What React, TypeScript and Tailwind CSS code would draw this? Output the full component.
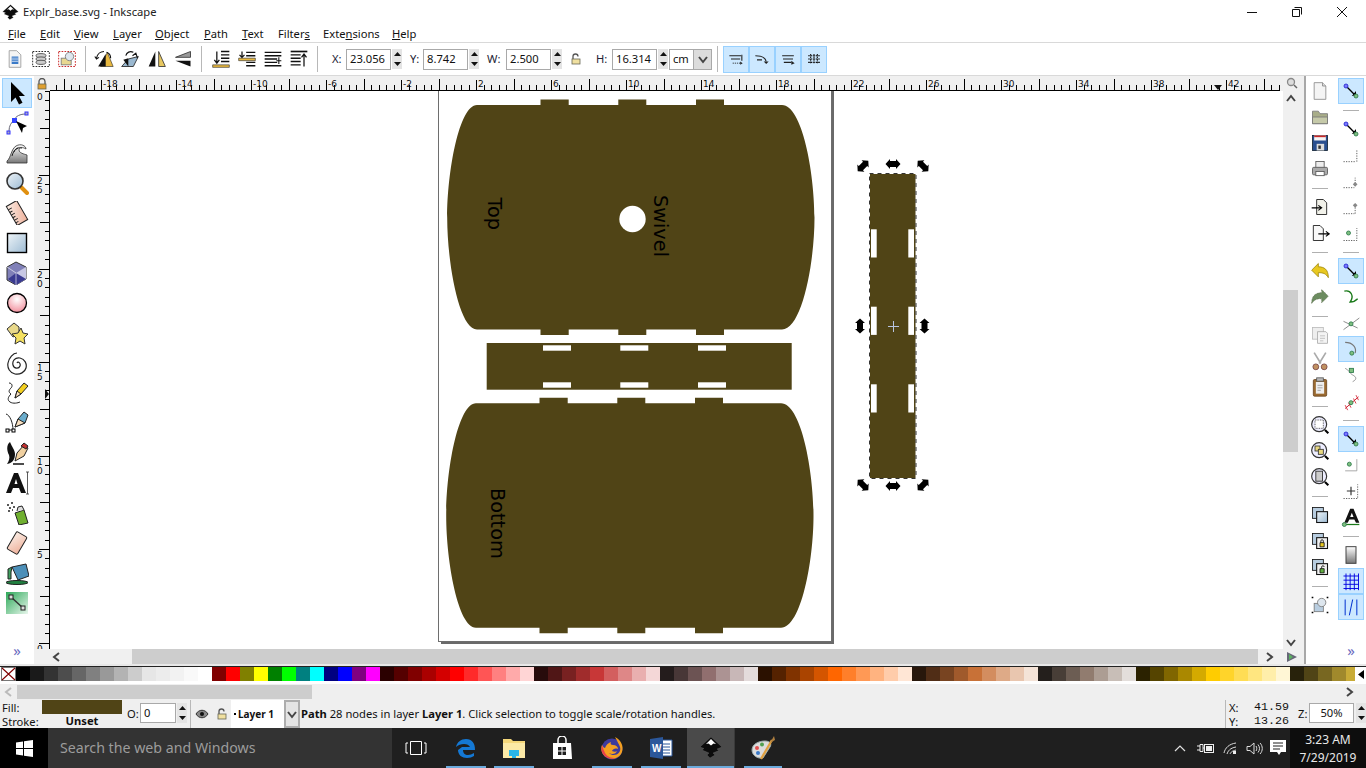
import type { ReactNode } from "react";

const OLIVE = "#504416";

const swatches = [
  "#000000","#1a1a1a","#333333","#4d4d4d","#666666","#808080","#999999","#b3b3b3","#cccccc","#e6e6e6","#ececec","#f2f2f2","#f9f9f9","#ffffff",
  "#800000","#ff0000","#808000","#ffff00","#008000","#00ff00","#008080","#00ffff","#000080","#0000ff","#800080","#ff00ff",
  "#2b0000","#550000","#800000","#aa0000","#d40000","#ff0000","#ff2a2a","#ff5555","#ff8080","#ffaaaa","#ffd5d5",
  "#280b0b","#501616","#782121","#a02c2c","#c83737","#d35f5f","#de8787","#e9afaf","#f4d7d7",
  "#241c1c","#483737","#6c5353","#916f6f","#ac9393","#c8b7b7","#e3dbdb",
  "#2b1100","#552200","#803300","#aa4400","#d45500","#ff6600","#ff7f2a","#ff9955","#ffb380","#ffccaa","#ffe6d5",
  "#28170b","#502d16","#784421","#a05a2c","#c87137","#d38d5f","#deaa87","#e9c6af","#f4e3d7",
  "#241f1c","#483e37","#6c5d53","#917c6f","#ac9d93","#c8beb7","#e3dedb",
  "#2b2200","#554400","#806600","#aa8800","#d4aa00","#ffcc00","#ffd42a","#ffdd55","#ffe680","#ffeeaa","#fff6d5",
  "#28220b","#504416","#786721","#a0892c","#c8ab37",
];

const blueDot = (x: number, y: number) => <circle cx={x} cy={y} r="2.4" fill="#7a7aff" stroke="#2222cc" />;
const greenDot = (x: number, y: number) => <circle cx={x} cy={y} r="2.4" fill="#7fbf7f" stroke="#2a7a4a" />;
const dots = (d: string) => <path d={d} fill="none" stroke="#444" strokeDasharray="1.5 1.5" />;

const icons: Record<string, ReactNode> = {
  select: <path d="M6 1v20l4.500-4.500 3.500 7 3.500-1.800-3.500-6.700h6z" fill="#000" />,
  node: (
    <>
      <path d="M9 9C11 5 15 3 21 3M9 9C6 12 4 15 4 20" fill="none" stroke="#667" />
      <rect x="7" y="7" width="5" height="5" fill="#3344ff" />
      <rect x="20" y="1" width="3" height="3" fill="#aab" stroke="#33f" />
      <rect x="2" y="20" width="3" height="3" fill="#aab" stroke="#33f" />
      <path d="M11 10l11 5-4 2-1 5z" fill="#000" />
    </>
  ),
  tweak: (
    <>
      <path d="M2 20C6 17 6 8 11 5c5-3 10 0 10 3-3-2-7-2-7 1s5 4 8 5v8H2z" fill="url(#gGray)" stroke="#333" strokeWidth="0.8" />
      <path d="M9 11c1-3 4-5 8-4M7 15c1-4 3-7 6-8" fill="none" stroke="#222" />
    </>
  ),
  zoom: (
    <>
      <path d="M15 15l7 7" stroke="#e09010" strokeWidth="4" strokeLinecap="round" />
      <circle cx="10" cy="10" r="8" fill="url(#gBlue)" stroke="#333" strokeWidth="1.6" />
    </>
  ),
  measure: (
    <g transform="rotate(-30 12 12)">
      <rect x="6" y="1" width="12" height="22" fill="url(#gPeach)" stroke="#222" />
      <path d="M6 5h4M6 8h3M6 11h4M6 14h3M6 17h4M6 20h3" stroke="#222" />
    </g>
  ),
  rect: <rect x="2.500" y="2.500" width="19" height="19" fill="url(#gBlue)" stroke="#000" strokeWidth="1.400" />,
  box: (
    <>
      <path d="M11 1l10 5v12l-10 6-9-5V6z" fill="#8080b8" stroke="#333" />
      <path d="M11 12l10-6v12l-10 6z" fill="#c8c8e4" />
      <path d="M3 18l8-6 10 6-10 6z" fill="#3a3a90" />
      <path d="M2 6l9 6v12" fill="none" stroke="#fff" strokeWidth="0.6" />
    </>
  ),
  circle: <circle cx="12" cy="12" r="9.500" fill="url(#gPink)" stroke="#000" strokeWidth="1.300" />,
  star: (
    <>
      <path d="M2 8l7-6 5 4 0 7-6 3-3-4z" fill="#e8d88a" stroke="#333" />
      <path d="M16 7l2 5 5 1-4 4 1 6-5-3-5 3 1-6-4-4 6-1z" fill="#f4e060" stroke="#333" />
    </>
  ),
  spiral: (
    <path d="M12 12c1-2 4 0 3 3s-6 3-7-1 2-8 7-7 7 6 6 10-6 7-11 6-8-6-7-11S8 2 12 2" fill="none" stroke="#222" strokeWidth="1.200" />
  ),
  pencil: (
    <>
      <path d="M4 2c3 0 4 3 2 5s-3 4 0 6c-3 3-4 6-1 8 3 2 8 1 10 0" fill="none" stroke="#222" />
      <path d="M10 17l2-7 7-8 4 3-7 8z" fill="#f4d020" stroke="#222" />
      <path d="M10 17l2-7 4 3z" fill="#f8e0c0" stroke="#222" />
    </>
  ),
  pen: (
    <>
      <path d="M1 3c4 1 7 9 7 16H3" fill="none" stroke="#222" />
      <rect x="1" y="18" width="3" height="3" fill="#fff" stroke="#000" />
      <rect x="7" y="18" width="3" height="3" fill="#fff" stroke="#000" />
      <path d="M10 16l3-8 6-7 4 3-3 8z" fill="#6aaccc" stroke="#222" />
      <path d="M10 16l3-8 7 4z" fill="#f8e0c0" stroke="#222" />
    </>
  ),
  callig: (
    <>
      <path d="M5 1c-4 3-3 9-1 13 1 3 0 6-2 9 6-1 8-5 8-10 0-4-3-7-5-12z" fill="#111" />
      <path d="M10 20l2-8 7-8 4 3-4 8z" fill="#f0d0a0" stroke="#222" />
      <path d="M16 5l3-3 4 3-2 3z" fill="#c03030" stroke="#222" />
      <path d="M8 23h11" stroke="#111" strokeWidth="1.500" />
    </>
  ),
  text: (
    <>
      <path d="M1 22L9 2h4l8 20h-5l-2-5H8l-2 5zM9.500 13h3L11 8z" fill="#111" fillRule="evenodd" />
      <path d="M21 1h3M22.500 1v22M21 23h3" stroke="#333" strokeWidth="0.800" />
    </>
  ),
  spray: (
    <>
      <path d="M10 12l9-3 4 13-9 2z" fill="#70b030" stroke="#222" />
      <path d="M12 10l1-4 4-1 2 4" fill="#ddd" stroke="#222" />
      <path d="M2 4h2M6 2h2M4 7h2M8 6h2M3 10h2M7 9h1" stroke="#222" strokeWidth="1.500" />
    </>
  ),
  eraser: (
    <g transform="rotate(30 12 12)">
      <rect x="6" y="2" width="12" height="20" rx="1.500" fill="url(#gPeach)" stroke="#222" />
    </g>
  ),
  bucket: (
    <>
      <ellipse cx="12" cy="21.500" rx="11" ry="2" fill="#208040" stroke="#222" />
      <path d="M7 6l14-3 3 12-11 4z" fill="#4c8fb8" stroke="#222" />
      <path d="M7 6l-4 2 0 10 3 0 0-7z" fill="#40a060" stroke="#222" />
    </>
  ),
  gradient: (
    <>
      <rect x="1" y="1" width="22" height="22" fill="url(#gGreen)" />
      <path d="M6 6l12 11" stroke="#333" strokeWidth="1.500" />
      <rect x="4" y="4" width="4" height="4" fill="#ddd" stroke="#222" />
      <rect x="16" y="15" width="4" height="4" fill="#ddd" stroke="#222" />
    </>
  ),
  page: (
    <>
      <path d="M5 2h10l4 4v16H5z" fill="#f4f4f4" stroke="#888" />
      <path d="M15 2v4h4" fill="#ddd" stroke="#888" />
    </>
  ),
  open: (
    <>
      <path d="M3 5h7l2 3h9v12H3z" fill="#a8ad88" stroke="#777" />
      <path d="M3 12h18v8H3z" fill="#c5c9a9" stroke="#777" />
    </>
  ),
  save: (
    <>
      <rect x="3" y="3" width="18" height="18" fill="#2a4f90" stroke="#123" />
      <rect x="5" y="3" width="14" height="6" fill="#f4f4f4" />
      <rect x="5" y="3" width="14" height="2" fill="#c62828" />
      <rect x="8" y="13" width="9" height="8" fill="#ddd" />
      <rect x="10" y="15" width="3" height="4" fill="#333" />
    </>
  ),
  print: (
    <>
      <rect x="7" y="3" width="10" height="8" fill="#eee" stroke="#555" />
      <rect x="3" y="10" width="18" height="9" rx="1.500" fill="#aaa" stroke="#555" />
      <rect x="7" y="15" width="10" height="5" fill="#fff" stroke="#555" />
    </>
  ),
  imp: (
    <>
      <path d="M8 3h8l4 4v14H8z" fill="#f2f2ea" stroke="#111" />
      <path d="M2 13h11M10 10l4 3-4 3" fill="none" stroke="#000" strokeWidth="1.300" />
    </>
  ),
  exp: (
    <>
      <path d="M4 3h8l4 4v14H4z" fill="#f8f8f8" stroke="#111" />
      <path d="M10 13h12M19 10l4 3-4 3" fill="none" stroke="#000" strokeWidth="1.300" />
    </>
  ),
  undo: <path d="M2 11l8-8v4c7 0 12 3 12 13-3-5-6-6-12-6v5z" fill="#e8c820" stroke="#a08810" />,
  redo: <path d="M22 11l-8-8v4C7 7 2 10 2 20c3-5 6-6 12-6v5z" fill="#6c8c60" stroke="#607050" strokeDasharray="1 1" />,
  copy: (
    <>
      <rect x="3" y="3" width="13" height="14" fill="#eee" stroke="#bbb" />
      <path d="M9 8h10l2 2v12H9z" fill="#f4f4f4" stroke="#aaa" />
      <path d="M12 13h6M12 16h6M12 19h4" stroke="#bbb" />
    </>
  ),
  cut: (
    <>
      <path d="M5 2l8 13M19 2l-8 13" stroke="#aaa" strokeWidth="2" />
      <circle cx="7" cy="19" r="3.500" fill="#c09060" stroke="#744" />
      <circle cx="17" cy="19" r="3.500" fill="#c09060" stroke="#744" />
    </>
  ),
  paste: (
    <>
      <rect x="4" y="3" width="16" height="20" rx="1.500" fill="#9a6a30" stroke="#6a4420" />
      <path d="M7 6h10v14H7z" fill="#eee" />
      <rect x="8" y="1" width="8" height="4" fill="#bbb" stroke="#555" />
      <path d="M9 10h6M9 13h6M9 16h4" stroke="#999" />
    </>
  ),
  zoomSel: (
    <>
      <circle cx="11" cy="11" r="9" fill="#eef" stroke="#333" strokeWidth="1.400" />
      <rect x="6" y="6" width="10" height="10" fill="#fff" stroke="#333" strokeDasharray="1 1" />
      <path d="M18 18l4 4" stroke="#000" strokeWidth="2.500" />
    </>
  ),
  zoomDraw: (
    <>
      <circle cx="11" cy="11" r="9" fill="#eef" stroke="#333" strokeWidth="1.400" />
      <rect x="6" y="6" width="6" height="6" fill="#e8d880" stroke="#333" />
      <rect x="10" y="10" width="6" height="6" fill="#e8d880" stroke="#333" />
      <path d="M18 18l4 4" stroke="#000" strokeWidth="2.500" />
    </>
  ),
  zoomPage: (
    <>
      <circle cx="11" cy="11" r="9" fill="#eef" stroke="#333" strokeWidth="1.400" />
      <rect x="7" y="5" width="8" height="12" fill="#ccc" stroke="#222" />
      <path d="M18 18l4 4" stroke="#000" strokeWidth="2.500" />
    </>
  ),
  dup: (
    <>
      <rect x="3" y="3" width="13" height="13" fill="#b8cde0" stroke="#111" />
      <rect x="8" y="8" width="13" height="13" fill="url(#gBlue)" stroke="#111" strokeWidth="1.300" />
    </>
  ),
  clone: (
    <>
      <rect x="3" y="3" width="13" height="13" fill="#b8cde0" stroke="#111" />
      <rect x="8" y="8" width="13" height="13" fill="#f0f0f0" stroke="#111" strokeWidth="1.300" />
      <path d="M12 14h5v5h-5z" fill="#e8c820" stroke="#111" />
      <path d="M13 14v-2a1.500 1.500 0 013 0v2" fill="none" stroke="#111" />
    </>
  ),
  unlink: (
    <>
      <rect x="3" y="3" width="13" height="13" fill="#b8cde0" stroke="#111" />
      <rect x="8" y="8" width="13" height="13" fill="#f0f0f0" stroke="#111" strokeWidth="1.300" />
      <path d="M12 14h5v5h-5z" fill="#60b040" stroke="#111" />
      <path d="M14 14v-2a1.500 1.500 0 013 0" fill="none" stroke="#111" />
    </>
  ),
  selObj: (
    <>
      <path d="M2 2h2v2H2zM20 2h2v2h-2zM2 20h2v2H2zM20 20h2v2h-2z" fill="#000" />
      <rect x="5" y="10" width="11" height="10" fill="#b8cde0" stroke="#777" />
      <circle cx="14" cy="9" r="5" fill="#dde6ee" stroke="#777" />
    </>
  ),
  snapMain: (
    <>
      <path d="M6 6l11 11" stroke="#000" strokeWidth="1.600" />
      <path d="M13 18l5-1 0-5z" fill="#000" />
      {blueDot(6, 6)}
      {greenDot(18, 18)}
    </>
  ),
  snapBbox: dots("M3 20h14M19 20V6"),
  snapEdge: (
    <>
      {dots("M3 20h13M17 18V8")}
      <rect x="15" y="14" width="4" height="4" fill="#888" transform="rotate(45 17 16)" />
    </>
  ),
  snapCorner: (
    <>
      {dots("M3 20h13M17 20V10")}
      <rect x="15" y="8" width="4" height="4" fill="#888" transform="rotate(45 17 10)" />
    </>
  ),
  snapCenter: (
    <>
      {dots("M3 21h16V6")}
      {greenDot(9, 12)}
    </>
  ),
  snapPath: <path d="M4 5c8-2 12 6 7 13 3 0 6-1 9-4" fill="none" stroke="#1a7a1a" strokeWidth="1.600" />,
  snapInter: (
    <>
      <path d="M3 20L22 6M3 10l17 8" stroke="#777" />
      {greenDot(12, 13)}
    </>
  ),
  snapCurve: (
    <>
      <path d="M5 4c9 0 14 6 12 13" fill="none" stroke="#777" strokeWidth="1.400" />
      {greenDot(13, 17)}
    </>
  ),
  snapSmooth: (
    <>
      <path d="M5 4c5 2 5 6 9 8s6 5 0 8" fill="none" stroke="#888" />
      <rect x="10" y="4" width="5" height="5" fill="#7fbf7f" stroke="#2a7a4a" />
    </>
  ),
  snapMid: (
    <>
      <path d="M5 21L21 7" stroke="#d02030" strokeWidth="1.200" />
      <path d="M5 17l3 6M9 14l3 6M15 9l3 6M18 5l3 6" stroke="#d02030" />
      {greenDot(12, 14)}
    </>
  ),
  snapObjMid: (
    <>
      <path d="M5 19h14V5" fill="none" stroke="#999" />
      {greenDot(10, 11)}
    </>
  ),
  snapObjCenter: (
    <>
      <path d="M7 12h10M12 7v10" stroke="#333" strokeWidth="1.400" />
      {dots("M3 21h17V4")}
    </>
  ),
  snapText: (
    <>
      <path d="M4 19L11 2h4l7 17h-4l-2-4H10l-2 4zM11 12h4l-2-5z" fill="#111" fillRule="evenodd" />
      <path d="M3 21h19" stroke="#1a7a1a" strokeWidth="1.500" />
      {greenDot(4, 21)}
    </>
  ),
  snapPage: <rect x="6" y="2" width="12" height="20" fill="url(#gGray)" stroke="#444" strokeWidth="1.200" />,
  grid: (
    <path d="M3 6h18M3 11h18M3 16h18M3 21h18M6 3v20M11 3v20M16 3v20M21 3v20" stroke="#0000e0" strokeWidth="1.100" fill="none" />
  ),
  guide: <path d="M5 3v19M19 3v19M10 22l4-19" stroke="#0030d0" strokeWidth="1.200" fill="none" />,
  doc: (
    <>
      <path d="M5 2h9l5 5v15H5z" fill="#f4f4f4" stroke="#999" />
      <path d="M8 9h8v9H8z" fill="#3a7ac8" />
      <path d="M8 11h8M8 13h8M8 15h8" stroke="#fff" strokeWidth="0.700" />
    </>
  ),
  selLayer: (
    <>
      <rect x="2" y="3" width="20" height="18" fill="none" stroke="#000" strokeDasharray="2 1.500" />
      <ellipse cx="12" cy="8" rx="6" ry="2.500" fill="#ccc" stroke="#444" />
      <ellipse cx="12" cy="12" rx="6" ry="2.500" fill="#ccc" stroke="#444" />
      <ellipse cx="12" cy="16" rx="6" ry="2.500" fill="#ccc" stroke="#444" />
    </>
  ),
  selAll: (
    <>
      <rect x="2" y="3" width="20" height="18" fill="none" stroke="#c00000" strokeDasharray="2 1.500" />
      <rect x="5" y="11" width="12" height="8" fill="#e8d890" stroke="#777" />
      <circle cx="15" cy="9" r="5" fill="#dde6ee" stroke="#777" />
    </>
  ),
  rotCcw: (
    <>
      <path d="M8 21h15l-7-17z" fill="#e8b840" stroke="#222" strokeWidth="0.700" />
      <path d="M14 21V6L5 21z" fill="#111" />
      <path d="M3 11C4 6 8 3 12 3M20 11c0-3-2-6-5-7M1 9l2 3 3-2" fill="none" stroke="#111" strokeWidth="1.300" />
    </>
  ),
  rotCw: (
    <>
      <path d="M2 21h14l6-12-12 3z" fill="#9ab8d0" stroke="#222" />
      <path d="M10 21L4 13l6-2z" fill="#111" />
      <path d="M7 8c1-4 5-6 9-4M21 11l-2-6-4 3" fill="none" stroke="#111" strokeWidth="1.400" />
    </>
  ),
  flipH: (
    <>
      <path d="M10 3v18H2z" fill="#111" />
      <path d="M14 3v18h8z" fill="#e8c860" stroke="#333" />
    </>
  ),
  flipV: (
    <>
      <path d="M21 3v7H3z" fill="#999" stroke="#333" />
      <path d="M21 21v-7H3z" fill="#111" />
    </>
  ),
  raiseTop: (
    <>
      <path d="M12 3h10M12 7h10M12 11h10M12 15h10" stroke="#111" strokeWidth="1.700" />
      <path d="M2 19h20v3H2z" fill="#e8b840" stroke="#222" strokeWidth="0.700" />
      <path d="M7 3v13M4 13l3 4 3-4" fill="none" stroke="#111" strokeWidth="1.500" />
    </>
  ),
  raise: (
    <>
      <path d="M11 4h11M11 8h11M11 16h11M11 20h11" stroke="#111" strokeWidth="1.700" />
      <path d="M2 11h20v3H2z" fill="#e8b840" stroke="#222" strokeWidth="0.700" />
      <path d="M6 3v7M3 7l3 3 3-3" fill="none" stroke="#111" strokeWidth="1.500" />
    </>
  ),
  lower: (
    <>
      <path d="M2 4h20M2 8h20M2 12h15M2 16h15M2 20h20" stroke="#111" strokeWidth="1.700" />
      <path d="M19 10v8M16 14h6" stroke="#111" strokeWidth="1.300" />
    </>
  ),
  lowerBot: (
    <>
      <path d="M2 3h20" stroke="#111" strokeWidth="2" />
      <path d="M2 7h12M2 11h12M2 15h12M2 19h12" stroke="#111" strokeWidth="1.700" />
      <path d="M18 21V7M15 10l3-4 3 4" fill="none" stroke="#111" strokeWidth="1.500" />
    </>
  ),
  snapA: (
    <>
      <path d="M4 8h14M6 12h11M19 7v7" stroke="#222" strokeWidth="1.300" />
      <path d="M8 17h10" stroke="#222" strokeDasharray="1.500 1" />
      <path d="M17 15l3 2-3 2z" fill="#222" />
    </>
  ),
  snapB: (
    <>
      <path d="M4 8c8 0 12 2 13 7M6 13h6" fill="none" stroke="#222" strokeWidth="1.300" />
      <path d="M14 15l3 3 3-3z" fill="#222" />
    </>
  ),
  snapC: (
    <>
      <path d="M5 8h14M6 12h12M7 16h9" stroke="#222" strokeWidth="1.300" />
      <path d="M16 14l4 3-4 2z" fill="#222" />
    </>
  ),
  snapD: <path d="M5 8h14M5 12h14M5 16h14M8 6v12M12 6v12M16 6v12" stroke="#111" strokeWidth="1.300" strokeDasharray="2 1" />,
};

const Icon = ({ name, size = 24 }: { name: string; size?: number }) => (
  <svg viewBox="0 0 24 24" width={size} height={size} className="block shrink-0">
    {icons[name]}
  </svg>
);

const Menu = ({ w, u, rest, pre = "" }: { w: string; u: string; rest: string; pre?: string }) => (
  <div className={`${w} shrink-0`}>
    {pre}
    <span className="underline">{u}</span>
    {rest}
  </div>
);

const Btn = ({ name, ml = "" }: { name: string; ml?: string }) => (
  <div className={`flex h-[26px] w-[26px] shrink-0 items-center justify-center ${ml}`}>
    <Icon name={name} size={20} />
  </div>
);

const VSep = ({ cls }: { cls: string }) => <div className={`h-[26px] w-px shrink-0 bg-[#b8b8b8] ${cls}`} />;

const Spin = ({ cls = "" }: { cls?: string }) => (
  <div className={`flex h-[20px] w-[10px] shrink-0 flex-col items-center justify-around bg-[#e4e4e4] ${cls}`}>
    <svg width="7" height="4"><path d="M3.500 0L7 4H0z" fill="#111" /></svg>
    <svg width="7" height="4"><path d="M0 0h7L3.500 4z" fill="#111" /></svg>
  </div>
);

const Field = ({ label, value, labelCls }: { label: string; value: string; labelCls: string }) => (
  <>
    <span className={`shrink-0 text-[11.2px] text-[#223] ${labelCls}`}>{label}</span>
    <div className="flex h-[21px] w-[45px] shrink-0 items-center border border-[#a9a9a9] bg-white pl-[3px] text-[11.2px] text-[#111]">
      {value}
    </div>
    <Spin cls="ml-[1px]" />
  </>
);

const Toggle = ({ name }: { name: string }) => (
  <div className="flex h-[27px] w-[26px] items-center justify-center border border-[#99d1ff] bg-[#cce8ff]">
    <Icon name={name} size={20} />
  </div>
);

const leftTools = ["select","node","tweak","zoom","measure","rect","box","circle","star","spiral","pencil","pen","callig","text","spray","eraser","bucket","gradient"];

const col1: (string | null)[] = ["page","open","save","print",null,"imp","exp",null,"undo","redo",null,"copy","cut","paste",null,"zoomSel","zoomDraw","zoomPage",null,"dup","clone","unlink",null,"selObj"];
const col2: (string | null)[] = ["*snapMain",null,"snapMain","snapBbox","snapEdge","snapCorner","snapCenter",null,"*snapMain","snapPath","snapInter","*snapCurve","snapSmooth","snapMid",null,"*snapMain","snapObjMid","snapObjCenter","snapText",null,"snapPage","*grid","*guide"];

const ToolColumn = ({ items, w }: { items: (string | null)[]; w: string }) => (
  <div className={`flex flex-col items-center ${w}`}>
    {items.map((it, i) => {
      if (it === null) return <div key={i} className="my-[5.5px] h-px w-[16px] bg-[#b0b0b0]" />;
      const on = it.startsWith("*");
      return (
        <div
          key={i}
          className={`flex h-[26px] w-[26px] items-center justify-center ${on ? "border border-[#99d1ff] bg-[#cce8ff]" : ""}`}
        >
          <Icon name={on ? it.slice(1) : it} size={20} />
        </div>
      );
    })}
  </div>
);

const HRuler = () => {
  const ticks = [];
  for (let i = -51; i <= 112; i++) {
    const x = 438.5 + i * 7.5;
    const h = i % 10 === 0 ? 11 : i % 5 === 0 ? 10 : 5;
    ticks.push(<path key={i} d={`M${Math.round(x) + 0.5} ${14 - h}V14`} stroke="#000" />);
  }
  const labels = [];
  for (let v = -18; v <= 42; v += 4) {
    labels.push(
      <text key={v} x={438.5 + v * 18.75 + 2} y="10.500" fontSize="9" fontFamily="'DejaVu Sans',sans-serif" fill="#111">
        {v}
      </text>,
    );
  }
  return (
    <svg width="1230" height="15" viewBox="50 0 1230 15" className="block">
      {ticks}
      {labels}
      <path d="M50 14.500H1280" stroke="#000" />
      <path d="M1214 9h8l-4 5z" fill="#111" />
    </svg>
  );
};

const VRuler = () => {
  const ticks = [];
  for (let i = 0; i <= 60; i++) {
    const y = 642.5 - i * 9.35;
    const w = i % 10 === 0 ? 10 : i % 5 === 0 ? 9 : 4;
    ticks.push(<path key={i} d={`M${15 - w} ${Math.round(y) + 0.5}H15`} stroke="#000" />);
  }
  const labels = [];
  for (let v = 0; v <= 30; v += 5) {
    const y = 642.5 - v * 18.7;
    String(v).split("").forEach((d, j) => {
      labels.push(
        <text key={`${v}-${j}`} x="3" y={y + 9 + j * 9} fontSize="9" fontFamily="'DejaVu Sans',sans-serif" fill="#111">
          {d}
        </text>,
      );
    });
  }
  return (
    <svg width="16" height="558" viewBox="0 91 16 558" className="block">
      {ticks}
      {labels}
      <path d="M15.500 91V649" stroke="#000" />
      <path d="M11 389v10l4-5z" fill="#111" />
    </svg>
  );
};

const pieceTop =
  "M477 105H540.500V99.500H568.700V105H618.300V99.500H646.300V105H696V99.500H724V105H782C802 105 814.500 172 814.500 217.500C814.500 263 802 329.500 782 329.500H724V335H696V329.500H646.300V335H618.300V329.500H568.700V335H540.500V329.500H477C459 329.500 447.200 263 447.200 217.500C447.200 172 459 105 477 105Z";

const Handle = ({ x, y, r }: { x: number; y: number; r: number }) => (
  <path
    transform={`translate(${x} ${y}) rotate(${r})`}
    d="M-7.500 0L-3 -5V-3H3V-5L7.500 0L3 5V3H-3V5Z"
    fill="#000"
  />
);

const Drawing = () => (
  <svg width="1233" height="558" viewBox="50 91 1233 558" className="block bg-white">
    <rect x="441" y="91" width="393" height="553" fill="#6a6a6a" />
    <rect x="438.500" y="85" width="393" height="556.500" fill="#fff" stroke="#6e6e6e" />
    <path d={pieceTop} fill={OLIVE} />
    <circle cx="632.500" cy="219" r="13.200" fill="#fff" />
    <text transform="translate(488 197.500) rotate(90)" fontSize="19.300" fontFamily="'DejaVu Sans',sans-serif" fill="#000">Top</text>
    <text transform="translate(654 195) rotate(90)" fontSize="19.300" fontFamily="'DejaVu Sans',sans-serif" fill="#000">Swivel</text>
    <rect x="486.700" y="343" width="305" height="46.700" fill={OLIVE} />
    {[543, 620.3, 698].map((x) => (
      <g key={x} fill="#fff">
        <rect x={x} y="345.300" width="28" height="5.400" />
        <rect x={x} y="382.300" width="28" height="5.400" />
      </g>
    ))}
    <g transform="translate(-1 298.200)">
      <path d={pieceTop} fill={OLIVE} />
    </g>
    <text transform="translate(491 488) rotate(90)" fontSize="19.300" fontFamily="'DejaVu Sans',sans-serif" fill="#000">Bottom</text>
    <rect x="869.500" y="173.500" width="46.500" height="305" fill={OLIVE} />
    {[229.3, 306.7, 384.3].map((y) => (
      <g key={y} fill="#fff">
        <rect x="871" y={y} width="5.700" height="28.200" />
        <rect x="908.300" y={y} width="5.700" height="28.200" />
      </g>
    ))}
    <rect x="869.500" y="173.500" width="46.500" height="305" fill="none" stroke="#fff" strokeWidth="1" />
    <rect x="869.500" y="173.500" width="46.500" height="305" fill="none" stroke="#333" strokeWidth="1" strokeDasharray="4 4" />
    <path d="M888 326.500h11M893.500 321v11" stroke="#b8c4e0" strokeWidth="1" />
    <Handle x={863} y={166} r={-45} />
    <Handle x={893} y={164} r={0} />
    <Handle x={923} y={166} r={45} />
    <Handle x={860} y={326} r={90} />
    <Handle x={924.500} y={326} r={90} />
    <Handle x={863} y={485} r={45} />
    <Handle x={893} y={486} r={0} />
    <Handle x={923} y={485} r={-45} />
  </svg>
);

const Arrow = ({ d }: { d: "l" | "r" | "u" | "v" }) => {
  const path = d === "l" ? "M7 1L2 5l5 4" : d === "r" ? "M3 1l5 4-5 4" : d === "u" ? "M1 7l4-5 4 5" : "M1 3l4 5 4-5";
  return (
    <svg width="10" height="10" className="block shrink-0">
      <path d={path} fill="none" stroke="#444" strokeWidth="2" />
    </svg>
  );
};

const Lock = ({ open = false }: { open?: boolean }) => (
  <svg width="12" height="12" viewBox="0 0 12 12" className="block">
    <path d={open ? "M3 6V3.500a2.500 2.500 0 015 0" : "M3 6V3.500a3 3 0 016 0V6"} fill="none" stroke="#555" strokeWidth="1.300" />
    <rect x="2" y="6" width="8" height="5" fill={open ? "#f0e0a0" : "#e0a030"} stroke="#665" strokeWidth="0.800" />
  </svg>
);

const Palette = () => (
  <>
    <div className="h-[2px] bg-[#e8e8e8]" />
    <div className="h-px bg-[#222]" />
    <div className="flex h-[14px] bg-white">
      <svg width="15" height="14" className="ml-px block shrink-0">
        <rect x="0.500" y="0.500" width="14" height="13" fill="#fff" stroke="#777" />
        <path d="M1 1l13 12M14 1L1 13" stroke="#800000" strokeWidth="1.100" />
      </svg>
      <div className="flex w-[1339px] overflow-hidden">
        {swatches.map((c, i) => (
          <div key={i} className="h-full w-[14px] shrink-0" style={{ backgroundColor: c }} />
        ))}
      </div>
      <div className="flex flex-1 items-center justify-center">
        <svg width="6" height="9"><path d="M6 0v9L0 4.500z" fill="#000" /></svg>
      </div>
    </div>
    <div className="h-[3px] bg-white" />
    <div className="flex h-[16px] items-center bg-[#efefef]">
      <div className="flex w-[17px] justify-center opacity-30"><Arrow d="l" /></div>
      <div className="h-[14px] w-[295px] bg-[#cdcdcd]" />
      <div className="ml-auto mr-[12px]"><Arrow d="r" /></div>
    </div>
  </>
);

const StatusBar = () => (
  <div className="flex h-[28px] items-stretch bg-[#efefef] text-[11.2px] text-[#111]">
    <div className="flex w-[42px] flex-col justify-between pl-[2px] pt-px leading-[13px]">
      <span>Fill:</span>
      <span>Stroke:</span>
    </div>
    <div className="flex w-[80px] flex-col">
      <div className="h-[14px]" style={{ backgroundColor: OLIVE }} />
      <div className="text-center font-bold leading-[14px]">Unset</div>
    </div>
    <div className="ml-[5px] flex w-[13px] items-center">O:</div>
    <div className="mt-[3px] flex h-[20px] w-[36px] items-center border border-[#a9a9a9] bg-white pl-[3px]">0</div>
    <Spin cls="mt-[3px] ml-[1px]" />
    <div className="ml-[3px] w-px bg-[#b8b8b8]" />
    <div className="ml-[1px] flex w-[20px] items-center justify-center">
      <svg width="14" height="10" viewBox="0 0 14 10"><path d="M1 5c3-5 9-5 12 0-3 5-9 5-12 0z" fill="#888" stroke="#333" /><circle cx="7" cy="5" r="2" fill="#111" /></svg>
    </div>
    <div className="flex w-[20px] items-center justify-center"><Lock open /></div>
    <div className="ml-[-1px] flex w-[53px] items-center bg-white pl-[3px] text-[10px] font-bold">
      <span className="mr-[2px] h-[2px] w-[2px] bg-black" />Layer 1
    </div>
    <div className="flex w-[16px] items-center justify-center border-2 border-[#adadad] bg-[#e4e4e4]"><Arrow d="v" /></div>
    <div className="ml-[1px] flex flex-1 items-center whitespace-nowrap">
      <span><b>Path</b> 28 nodes in layer <b>Layer 1</b>. Click selection to toggle scale/rotation handles.</span>
    </div>
    <div className="w-px bg-[#b8b8b8]" />
    <div className="flex w-[72px] flex-col justify-between pl-[3px] leading-[13px]">
      <div className="flex justify-between pr-[9px] pt-px"><span>X:</span><span className="font-['Liberation_Mono',monospace] text-[11.7px]">41.59</span></div>
      <div className="flex justify-between pr-[9px]"><span>Y:</span><span className="font-['Liberation_Mono',monospace] text-[11.7px]">13.26</span></div>
    </div>
    <div className="flex w-[11px] items-center">Z:</div>
    <div className="mt-[3px] flex h-[20px] w-[45px] items-center justify-center border border-[#a9a9a9] bg-white">50%</div>
    <Spin cls="mt-[3px] ml-[2px]" />
  </div>
);

const Task = ({ w, on, line, children }: { w: string; on?: boolean; line?: boolean; children: ReactNode }) => (
  <div className={`relative flex h-full shrink-0 items-center justify-center ${w} ${on ? "bg-[#4a4a4a]" : ""}`}>
    {children}
    {line && <div className={`absolute bottom-0 h-[2px] bg-[#6baadc] ${on ? "inset-x-0" : "inset-x-[4px]"}`} />}
  </div>
);

const Taskbar = () => (
  <div className="flex h-[40px] items-stretch bg-[#1f1f1f] text-white">
    <div className="flex w-[48px] items-center justify-center bg-black">
      <svg width="17" height="17" viewBox="0 0 17 17"><path d="M0 2.500l7-1v6.500H0zM8 1.300L17 0v8H8zM0 9h7v6.500l-7-1zM8 9h9v8l-9-1.300z" fill="#fff" /></svg>
    </div>
    <div className="flex w-[344px] items-center bg-[#333333] pl-[12px] text-[14.2px] text-[#9c9c9c]">Search the web and Windows</div>
    <Task w="w-[47px]">
      <svg width="22" height="16" viewBox="0 0 22 16"><path d="M5.500 1.500h11v13h-11z" fill="none" stroke="#fff" /><path d="M3 3H1v10h2M19 3h2v10h-2" fill="none" stroke="#fff" /></svg>
    </Task>
    <Task w="w-[48px] ml-[3px]" line>
      <svg width="24" height="24" viewBox="0 0 24 24"><path d="M4 14h17c0-7-3-11-9-11-5 0-9 3-10 8 2-2 5-3 8-3 3 0 5 1 6 3H8M4 14c0 5 4 8 9 8 3 0 5-1 7-2v-3c-2 1-4 2-6 2-3 0-5-2-5-5" fill="#1478d4" /></svg>
    </Task>
    <Task w="w-[48px]" line>
      <svg width="24" height="22" viewBox="0 0 24 22"><path d="M1 2h8l2 2h12v17H1z" fill="#f4d77a" /><path d="M1 6h22v15H1z" fill="#fbe9a6" /><path d="M7 13h10v6h-3v2h-4v-2H7z" fill="#29b6e8" /></svg>
    </Task>
    <Task w="w-[48px]">
      <svg width="22" height="24" viewBox="0 0 22 24"><path d="M2 7h18l1 16-19 0z" fill="#fff" /><path d="M7 7V4a4 4 0 018 0v3" fill="none" stroke="#fff" strokeWidth="1.500" /><path d="M7 11h3.500v3.500H7zM11.500 11H15v3.500h-3.500zM7 15.500h3.500V19H7zM11.500 15.500H15V19h-3.500z" fill="#1f1f1f" /></svg>
    </Task>
    <Task w="w-[48px] ml-[2px]" line>
      <svg width="24" height="24" viewBox="0 0 24 24">
        <circle cx="12" cy="13" r="10.500" fill="#3d3a9c" />
        <path d="M15 1c6 3 9 9 7 15-2 6-9 8-14 6-5-2-8-7-6-13 1 2 2 3 3 3 1-3 3-5 6-6-1 2 0 3 2 3 3 0 5 2 5 4-3-1-5 0-6 2 2 1 4 1 5 0-1 3-5 4-8 2 5 5 13 0 11-6-1-3-3-6-5-10z" fill="#f4a020" />
        <path d="M2 9c-2 6 1 11 6 13 3 1 6 1 8 0-5 0-9-1-11-5-1-2-2-5-3-8z" fill="#e8404a" />
      </svg>
    </Task>
    <Task w="w-[48px] ml-px" line>
      <svg width="24" height="24" viewBox="0 0 24 24">
        <path d="M11 4h12v16H11z" fill="#fff" stroke="#2b579a" />
        <path d="M14 8h7M14 11h7M14 14h7M14 17h7" stroke="#2b579a" />
        <path d="M1 3l13-2v22L1 21z" fill="#2b579a" />
        <text x="3" y="16" fontSize="10" fontWeight="700" fontFamily="'Liberation Sans',sans-serif" fill="#fff">W</text>
      </svg>
    </Task>
    <Task w="w-[47px] ml-[2px]" on line>
      <InkLogo size={24} />
    </Task>
    <div className="w-px bg-[#3a3a3a]" />
    <Task w="w-[46px] ml-[5px]" line>
      <svg width="26" height="26" viewBox="0 0 26 26">
        <path d="M2 15c0-6 7-9 13-9 5 0 7 3 5 6l-7 11C7 24 2 20 2 15z" fill="#dcdcdc" stroke="#9aa" />
        <circle cx="7" cy="13" r="2" fill="#e05050" />
        <circle cx="12" cy="9.500" r="2" fill="#50a050" />
        <circle cx="8" cy="18" r="2" fill="#3a7ac8" />
        <path d="M11 24L22 5" stroke="#e0a040" strokeWidth="2.200" />
        <path d="M20 8l4-7 1 4z" fill="#b08040" />
      </svg>
    </Task>
    <div className="ml-auto flex items-center">
      <div className="flex w-[24px] justify-center">
        <svg width="12" height="7"><path d="M1 6l5-5 5 5" fill="none" stroke="#e0e0e0" strokeWidth="1.200" /></svg>
      </div>
      <div className="flex w-[26px] justify-center">
        <svg width="17" height="11" viewBox="0 0 17 11"><path d="M0 3h3M0 7h3M3 1.500h3v7H3zM6 5h2" stroke="#eee" fill="none" /><rect x="7.500" y="1.500" width="9" height="8" fill="none" stroke="#eee" /><rect x="9" y="3" width="6" height="5" fill="#eee" /></svg>
      </div>
      <div className="flex w-[24px] justify-center">
        <svg width="14" height="13" viewBox="0 0 14 13"><path d="M1 11C2 6 6 2 13 1M4 12c1-3 3-6 9-7M7 12c1-2 2-3 6-4" fill="none" stroke="#ddd" /><rect x="10" y="9" width="3" height="3" fill="#eee" /></svg>
      </div>
      <div className="flex w-[24px] justify-center">
        <svg width="17" height="13" viewBox="0 0 17 13"><path d="M1 4.500h3l4-3.500v11L4 8.500H1z" fill="none" stroke="#ddd" /><path d="M10 4c1 1.500 1 3.500 0 5M12 2.500c2 2.500 2 5.500 0 8M14 1c3 3 3 8 0 11" fill="none" stroke="#ddd" /></svg>
      </div>
      <div className="flex w-[24px] justify-center">
        <svg width="16" height="16" viewBox="0 0 16 16"><path d="M0 0h16v12h-5l-2 3-2-3H0z" fill="#fff" /><path d="M3 3h10M3 6h10M3 9h7" stroke="#1f1f1f" /></svg>
      </div>
      <div className="flex h-full w-[76px] flex-col items-center justify-center bg-[#0d0d0d] pt-px text-[12px] leading-[18px] text-[#e8e8e8]">
        <span>3:23 AM</span>
        <span>7/29/2019</span>
      </div>
    </div>
  </div>
);

const InkLogo = ({ size }: { size: number }) => (
  <svg viewBox="0 0 24 24" width={size} height={size} className="block shrink-0">
    <path d="M12 1l11 10-5 2 2 1.500-6 2.500 2 2-5 3-3-3 2-2-7-3 2-1.500-4-1.500z" fill="#0c0c0c" stroke="#777" strokeWidth="0.300" />
    <path d="M12 3l5 5-2.500-.5L12 9.500 9.500 7.500 7 8z" fill="#fff" />
  </svg>
);

export default function App() {
  return (
    <div className="flex h-[768px] w-[1366px] flex-col overflow-hidden bg-[#f0f0f0] font-['Noto_Sans',sans-serif]">
      <svg className="h-0 w-0">
        <defs>
          <linearGradient id="gBlue" x1="0" y1="0" x2="1" y2="1"><stop offset="0" stopColor="#eef4f8" /><stop offset="1" stopColor="#9dbbd4" /></linearGradient>
          <linearGradient id="gGray" x1="0" y1="0" x2="0" y2="1"><stop offset="0" stopColor="#ffffff" /><stop offset="1" stopColor="#777777" /></linearGradient>
          <linearGradient id="gPeach" x1="0" y1="0" x2="1" y2="1"><stop offset="0" stopColor="#fbeee6" /><stop offset="1" stopColor="#eeb09a" /></linearGradient>
          <radialGradient id="gPink" cx="0.500" cy="0.300" r="0.800"><stop offset="0" stopColor="#ffffff" /><stop offset="1" stopColor="#f08090" /></radialGradient>
          <linearGradient id="gGreen" x1="0" y1="0" x2="1" y2="1"><stop offset="0" stopColor="#2eaa5a" /><stop offset="1" stopColor="#e8f6ec" /></linearGradient>
        </defs>
      </svg>

      <div className="flex h-[22px] items-center bg-white pt-[2px] text-[11.2px] text-[#222]">
        <div className="ml-[2px] mr-[4px]"><InkLogo size={17} /></div>
        <span>Explr_base.svg - Inkscape</span>
        <div className="ml-auto mr-[2px] flex">
          <div className="flex w-[45px] justify-center">
            <svg width="10" height="10"><path d="M0 5.500h10" stroke="#111" /></svg>
          </div>
          <div className="flex w-[45px] justify-center">
            <svg width="10" height="10"><path d="M2.500.5h7v7M.5 2.500h7v7h-7z" fill="none" stroke="#111" /></svg>
          </div>
          <div className="flex w-[45px] justify-center">
            <svg width="10" height="10"><path d="M0 0l10 10M10 0L0 10" stroke="#111" /></svg>
          </div>
        </div>
      </div>

      <div className="flex h-[21px] items-center border-b border-[#d9d9d9] bg-white pl-[8px] pt-[4px] text-[11.2px] leading-none text-[#111]">
        <Menu w="w-[32px]" u="F" rest="ile" />
        <Menu w="w-[34px]" u="E" rest="dit" />
        <Menu w="w-[39px]" u="V" rest="iew" />
        <Menu w="w-[42px]" u="L" rest="ayer" />
        <Menu w="w-[49px]" u="O" rest="bject" />
        <Menu w="w-[38px]" u="P" rest="ath" />
        <Menu w="w-[36px]" u="T" rest="ext" />
        <Menu w="w-[45px]" pre="Filter" u="s" rest="" />
        <Menu w="w-[69px]" pre="Exte" u="n" rest="sions" />
        <Menu w="w-[30px]" u="H" rest="elp" />
      </div>

      <div className="flex h-[33px] items-center border-b border-[#d9d9d9] bg-white pl-[2px]">
        <Btn name="doc" />
        <Btn name="selLayer" />
        <Btn name="selAll" />
        <VSep cls="ml-[5px]" />
        <Btn name="rotCcw" ml="ml-[5px]" />
        <Btn name="rotCw" />
        <Btn name="flipH" ml="ml-px" />
        <Btn name="flipV" />
        <VSep cls="ml-[5px]" />
        <Btn name="raiseTop" ml="ml-[6px]" />
        <Btn name="raise" />
        <Btn name="lower" />
        <Btn name="lowerBot" />
        <VSep cls="ml-[5px]" />
        <Field label="X:" value="23.056" labelCls="ml-[14px] w-[14px]" />
        <Field label="Y:" value="8.742" labelCls="ml-[8px] w-[13px]" />
        <Field label="W:" value="2.500" labelCls="ml-[8px] w-[19px]" />
        <div className="ml-[8px] w-[12px]"><Lock open /></div>
        <Field label="H:" value="16.314" labelCls="ml-[14px] w-[16px]" />
        <div className="ml-px flex h-[21px] w-[43px] items-center border border-[#a9a9a9] bg-white pl-[3px] text-[11.2px] text-[#111]">
          cm
          <div className="ml-auto flex h-full w-[18px] items-center justify-center border-l border-[#a9a9a9] bg-[#dcdcdc]"><Arrow d="v" /></div>
        </div>
        <VSep cls="ml-[5px]" />
        <div className="ml-[5px] flex">
          <Toggle name="snapA" />
          <Toggle name="snapB" />
          <Toggle name="snapC" />
          <Toggle name="snapD" />
        </div>
      </div>

      <div className="flex h-[588px]">
        <div className="flex w-[34px] shrink-0 flex-col items-center bg-white pt-[2px]">
          {leftTools.map((t, i) => (
            <div
              key={t}
              className={`flex h-[30px] w-[30px] items-center justify-center ${i === 0 ? "border border-[#99d1ff] bg-[#cce8ff]" : ""}`}
            >
              <Icon name={t} />
            </div>
          ))}
          <div className="mt-auto pb-[6px] text-[15px] leading-none text-[#6a6ac0]">»</div>
        </div>

        <div className="flex w-[1270px] flex-col">
          <div className="flex h-[15px]">
            <div className="flex w-[16px] items-center justify-center">
              <Lock />
            </div>
            <HRuler />
            <div className="flex flex-1 justify-center">
              <svg width="12" height="12" viewBox="0 0 12 12" className="mt-px"><circle cx="5" cy="5" r="3.500" fill="#ddd" stroke="#888" strokeWidth="1.300" /><path d="M8 8l3 3" stroke="#666" strokeWidth="1.500" /></svg>
            </div>
          </div>
          <div className="flex h-[558px]">
            <VRuler />
            <Drawing />
            <div className="flex w-[15px] flex-col items-center">
              <div className="flex h-[15px] items-center"><Arrow d="u" /></div>
              <div className="mt-[184px] h-[162px] w-full bg-[#cdcdcd]" />
              <div className="mt-auto flex h-[15px] items-center"><Arrow d="v" /></div>
            </div>
            <div className="w-[6px]" />
          </div>
          <div className="flex h-[15px] items-center">
            <div className="flex w-[32px] justify-end pr-[4px]"><Arrow d="l" /></div>
            <div className="ml-[66px] h-full w-[1126px] bg-[#cdcdcd]" />
            <div className="flex flex-1 items-center justify-around">
              <Arrow d="r" />
              <svg width="12" height="12"><path d="M1 1l10 5-10 5z" fill="#667" /><path d="M3 3l4 3-4 3z" fill="#5ab060" /></svg>
            </div>
          </div>
        </div>

        <div className="flex w-[62px] shrink-0 border-l-2 border-[#a8a8a8] bg-white pt-[2px]">
          <div className="w-[31px]">
            <ToolColumn items={col1} w="w-[28px]" />
          </div>
          <div className="flex flex-1 flex-col">
            <ToolColumn items={col2} w="w-[30px]" />
            <div className="mt-auto pb-[6px] text-center text-[15px] leading-none text-[#6a6ac0]">»</div>
          </div>
        </div>
      </div>

      <Palette />
      <StatusBar />
      <Taskbar />
    </div>
  );
}
